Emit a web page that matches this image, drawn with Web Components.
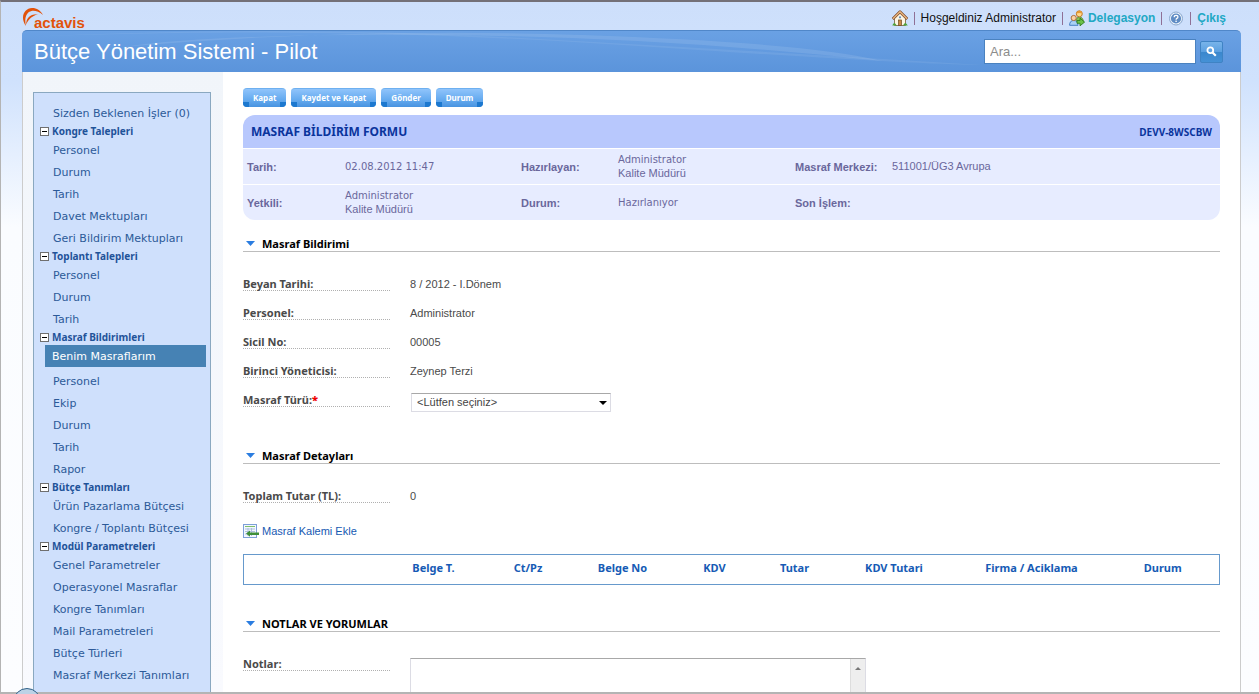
<!DOCTYPE html>
<html lang="tr">
<head>
<meta charset="utf-8">
<title>Bütçe Yönetim Sistemi - Pilot</title>
<style>
html, body { height: 100%; margin: 0; }
body { overflow: hidden; font-family: "Liberation Sans", Arial, sans-serif; font-size: 11px; color: #4a4a4a; }
</style>
</head>
<body>
<app-shell></app-shell>

<script>
const define = (name, html, setup) => {
  const tpl = document.createElement('template');
  tpl.innerHTML = html;
  customElements.define(name, class extends HTMLElement {
    constructor() {
      super();
      this.attachShadow({ mode: 'open' }).append(tpl.content.cloneNode(true));
    }
    connectedCallback() { if (setup) setup(this, this.shadowRoot); }
  });
};

/* Logo: swoosh and word mark */
define('brand-logo', `
<style>
:host { display: block; }
svg { display: block; }
</style>
<svg width="72" height="26" viewBox="0 0 72 26" role="img" aria-label="actavis">
  <path d="M4 18C-2.500 9 2.500 .3 10 .1 14.500 0 18.500 2.300 21 7 17 3.600 13 2.400 9.500 3 4.500 4 2 10 4 18Z" fill="#e2520a"/>
  <path d="M4.200 16.500C4 10.500 8 5.600 16 6.200 10.500 7.600 6.500 11 4.200 16.500Z" fill="#e2520a"/>
  <text x="12" y="20" font-family="Liberation Sans, Arial, sans-serif" font-size="15" font-weight="bold" fill="#e2520a">actavis</text>
</svg>`);

/* User links at the top right */
define('user-bar', `
<style>
:host { display: block; font-size: 12px; line-height: 16px; color: #111; }
nav { display: flex; align-items: center; gap: 6px; }
a { color: #22a8c4; font-weight: bold; text-decoration: none; display: flex; align-items: center; gap: 3px; }
i { width: 1px; height: 13px; background: #8f7096; }
svg { display: block; }
</style>
<nav>
  <a href="#" aria-label="Ana sayfa"><svg width="16" height="16" viewBox="0 0 16 16">
    <path d="M2.500 8v7.500h11V8L8 3Z" fill="#fdf6e4" stroke="#8c7a5c"/>
    <path d="M.7 9 8 1.800 15.300 9" fill="none" stroke="#7a4526" stroke-width="2.800" stroke-linejoin="round"/>
    <path d="M1 8.700 8 1.800 15 8.700" fill="none" stroke="#e9b780" stroke-width="1.500"/>
    <rect x="6.500" y="10" width="3" height="5.500" fill="#c98a48" stroke="#6f4a20" stroke-width=".7"/>
    <circle cx="8" cy="7.300" r="1.100" fill="#5d8ab8"/>
    <path d="M.3 15.600q1.700-5 4.500 0ZM11 15.600q2.200-5 4.800 0Z" fill="#4da33c"/></svg></a>
  <i></i>
  <span>Hoşgeldiniz Administrator</span>
  <i></i>
  <a href="#"><svg width="16" height="16" viewBox="0 0 16 16">
    <path d="M7 12q0-5 3.500-5t4 5Z" fill="#8cc152" stroke="#4f8a2c" stroke-width=".8"/>
    <circle cx="10.300" cy="3.800" r="3" fill="#ffd98a" stroke="#c07a28"/>
    <path d="M7.300 3.500Q8 .6 10.500.8q2.500.2 2.800 2.600-3-1-6 .1Z" fill="#e79a34"/>
    <path d="M.6 15.300Q.6 10.500 4.700 10.500t4.300 4.800Z" fill="#a9d0f5" stroke="#3a77bd" stroke-width=".9"/>
    <circle cx="4.700" cy="8" r="2.600" fill="#fbd2a4" stroke="#a8672c" stroke-width=".9"/>
    <path d="M8 10.500h3V8.200l4.600 3.900L11 15.800v-2.500H8Z" fill="#6cc24a" stroke="#2f7d1e" stroke-width=".9"/></svg>Delegasyon</a>
  <i></i>
  <a href="#" aria-label="Yardım"><svg width="16" height="16" viewBox="0 0 16 16">
    <circle cx="8" cy="8.500" r="6.500" fill="#eef4fb" stroke="#8ba9cf"/>
    <circle cx="8" cy="8.500" r="5.100" fill="#5f8cc4"/>
    <path d="M6.200 7.200q0-1.800 1.900-1.800t1.800 1.600q0 .9-1 1.400-.8.400-.8 1.300" fill="none" stroke="#fff" stroke-width="1.300"/>
    <rect x="7.400" y="10.600" width="1.400" height="1.400" fill="#fff"/></svg></a>
  <i></i>
  <a href="#">Çıkış</a>
</nav>`);

/* Blue banner with title and search */
define('app-banner', `
<style>
:host { display: block; }
header { position: relative; display: flex; align-items: center; justify-content: space-between; height: 42px; box-sizing: border-box;
  padding: 0 18px 0 12px; border-radius: 5px 5px 0 0; border-top: 1px solid #5087c9; overflow: hidden;
  background: linear-gradient(#6aa1e4, #5b94db); }
.wave { position: absolute; left: 0; top: 0; width: 100%; height: 36px; }
h1 { margin: 0; font-size: 22px; line-height: 28px; font-weight: normal; color: #fff; position: relative; }
form { display: flex; align-items: center; gap: 4px; position: relative; }
input { box-sizing: border-box; width: 212px; height: 25px; margin: 0; padding: 0 5px; border: 1px solid #4a82c0; border-radius: 0; background: #fff;
  font: 13px/20px "Liberation Sans", Arial, sans-serif; color: #333; }
input::placeholder { color: #8c8c8c; opacity: 1; }
button { box-sizing: border-box; width: 23px; height: 22px; padding: 0; border: 1px solid #3f83c4; border-radius: 2px; display: grid; place-items: center;
  background: linear-gradient(#78b4ea, #5a9fe0 50%, #3a87cd 50%, #4591d6); }
</style>
<header>
  <svg class="wave" viewBox="0 0 1219 36" preserveAspectRatio="none" aria-hidden="true">
    <path d="M0 6Q300-6 600 14T960 34Q700 18 480 6T0 6Z" fill="#fff" opacity=".07"/>
    <path d="M100 16Q330-4 560 4T860 30Q640 6 420 4T100 16Z" fill="#fff" opacity=".1"/>
  </svg>
  <h1>Bütçe Yönetim Sistemi - Pilot</h1>
  <form role="search">
    <input type="text" placeholder="Ara..." aria-label="Ara">
    <button type="button" aria-label="Ara"><svg width="11" height="11" viewBox="0 0 11 11"><circle cx="4.300" cy="4.300" r="2.900" fill="none" stroke="#fff" stroke-width="1.800"/><path d="m6.500 6.500 3.300 3.300" stroke="#fff" stroke-width="2.200"/></svg></button>
  </form>
</header>`);

/* Navigation */
define('nav-item', `
<style>
:host { display: block; }
a { display: block; padding: 2px 0 0 19px; line-height: 20px; color: #2c5a98; text-decoration: none; font-size: 11px; font-family: "DejaVu Sans", Verdana, sans-serif; white-space: nowrap; }
:host([current]) { margin-bottom: 3px; }
:host([current]) a { margin: 0 4px 0 11px; padding-left: 7px; background: #4682b4; color: #fff; }
</style>
<a href="#"><slot></slot></a>`);

define('nav-group', `
<style>
:host { display: block; }
button { display: flex; align-items: center; gap: 3px; height: 15px; margin: 0; padding: 0 0 0 6px; border: 0; background: none; color: #1f5399;
  font: bold 10px/15px "Noto Sans", Tahoma, sans-serif; white-space: nowrap; }
svg { display: block; }
</style>
<button type="button" aria-expanded="true"><svg width="9" height="9" viewBox="0 0 9 9" aria-hidden="true"><rect x=".5" y=".5" width="8" height="8" fill="#fff" stroke="#6f6f6f"/><path d="M2 4.500h5" stroke="#000"/></svg><span></span></button>
<slot></slot>`, (el, root) => { root.querySelector('span').textContent = el.getAttribute('heading'); });

define('side-nav', `
<style>
:host { display: block; }
nav { box-sizing: border-box; height: 100%; padding-top: 9px; overflow: hidden; background: #cfe0fc; border: 1px solid #8aa8c0; border-bottom: 0; }
</style>
<nav aria-label="Menü">
  <nav-item>Sizden Beklenen İşler (0)</nav-item>
  <nav-group heading="Kongre Talepleri">
    <nav-item>Personel</nav-item><nav-item>Durum</nav-item><nav-item>Tarih</nav-item>
    <nav-item>Davet Mektupları</nav-item><nav-item>Geri Bildirim Mektupları</nav-item>
  </nav-group>
  <nav-group heading="Toplantı Talepleri">
    <nav-item>Personel</nav-item><nav-item>Durum</nav-item><nav-item>Tarih</nav-item>
  </nav-group>
  <nav-group heading="Masraf Bildirimleri">
    <nav-item current>Benim Masraflarım</nav-item>
    <nav-item>Personel</nav-item><nav-item>Ekip</nav-item><nav-item>Durum</nav-item><nav-item>Tarih</nav-item><nav-item>Rapor</nav-item>
  </nav-group>
  <nav-group heading="Bütçe Tanımları">
    <nav-item>Ürün Pazarlama Bütçesi</nav-item><nav-item>Kongre / Toplantı Bütçesi</nav-item>
  </nav-group>
  <nav-group heading="Modül Parametreleri">
    <nav-item>Genel Parametreler</nav-item><nav-item>Operasyonel Masraflar</nav-item><nav-item>Kongre Tanımları</nav-item>
    <nav-item>Mail Parametreleri</nav-item><nav-item>Bütçe Türleri</nav-item><nav-item>Masraf Merkezi Tanımları</nav-item>
  </nav-group>
</nav>`);

/* Toolbar button */
define('action-button', `
<style>
:host { display: block; }
button { position: relative; display: block; height: 19px; margin: 0; padding: 0 10px; border: 0; border-top: 1px solid #6eb0f0; border-radius: 4px; overflow: hidden;
  background: linear-gradient(#90c4fb, #64aaef 60%, #4893e0); color: #fff; font: bold 8px/18px "Noto Sans", Tahoma, sans-serif; white-space: nowrap; }
button::before, button::after { content: ""; position: absolute; bottom: 0; width: 6px; height: 5px; background: #1c78cf; }
button::before { left: 0; }
button::after { right: 0; }
</style>
<button type="button"><slot></slot></button>`);

/* Document header card */
define('form-summary', `
<style>
:host { display: block; border-radius: 12px; overflow: hidden; color: #6a679c; }
header { display: flex; align-items: center; justify-content: space-between; height: 33px; padding: 0 8px; background: #b8c8fd; color: #0a349c; font-family: "Noto Sans", Tahoma, sans-serif; }
h2 { margin: 0; font-size: 12px; line-height: 16px; }
strong { font-size: 10px; line-height: 16px; }
dl { display: grid; grid-template-columns: 98fr 176fr 97fr 177fr 97fr 328fr; align-items: center; height: 35px; margin: 1px 0 0; padding-left: 4px; background: #e7ecff; line-height: 14px; }
dt { font-weight: bold; font-size: 11px; white-space: nowrap; }
dd { margin: 0; font: 10px/14px "DejaVu Sans", Verdana, sans-serif; }
dd span { display: block; font: 11px/13px "Liberation Sans", Arial, sans-serif; }
</style>
<header><h2>MASRAF BİLDİRİM FORMU</h2><strong>DEVV-8WSCBW</strong></header>
<dl>
  <dt>Tarih:</dt><dd>02.08.2012 11:47</dd>
  <dt>Hazırlayan:</dt><dd>Administrator<span>Kalite Müdürü</span></dd>
  <dt>Masraf Merkezi:</dt><dd><span>511001/ÜG3 Avrupa</span></dd>
</dl>
<dl>
  <dt>Yetkili:</dt><dd>Administrator<span>Kalite Müdürü</span></dd>
  <dt>Durum:</dt><dd>Hazırlanıyor</dd>
  <dt>Son İşlem:</dt><dd></dd>
</dl>`);

/* Section with underlined heading */
define('form-section', `
<style>
:host { display: block; }
h3 { display: flex; align-items: center; gap: 7px; margin: 0 0 23px; padding: 0 0 0 3px; border-bottom: 1px solid #bdbdbd; color: #000; font: bold 11px/15px "Noto Sans", Tahoma, sans-serif; }
svg { display: block; }
</style>
<h3><svg width="9" height="5" viewBox="0 0 9 5" aria-hidden="true"><path d="M0 0h9L4.500 5Z" fill="#2b7de0"/></svg><span></span></h3>
<slot></slot>`, (el, root) => { root.querySelector('span').textContent = el.getAttribute('heading'); });

define('field-row', `
<style>
:host { display: flex; align-items: flex-start; gap: 20px; height: 29px; }
.label { flex: none; width: 147px; height: 16px; box-sizing: border-box; border-bottom: 1px dotted #b0b0b0; font: bold 11px/18px "Noto Sans", Tahoma, sans-serif; white-space: nowrap; }
.value { flex: 1; line-height: 18px; }
</style>
<div class="label"><slot name="label"></slot></div><div class="value"><slot></slot></div>`);

define('expense-table', `
<style>
:host { display: block; }
table { width: 100%; height: 31px; table-layout: fixed; border-collapse: collapse; border: 1px solid #6699cc; }
th, td { padding: 0 0 4px; font: bold 11px/16px "Noto Sans", Tahoma, sans-serif; color: #165bb5; text-align: center; white-space: nowrap; }
</style>
<table>
  <colgroup><col style="width:141px"><col style="width:98px"><col style="width:91px"><col style="width:98px"><col style="width:86px"><col style="width:74px"><col style="width:125px"><col style="width:150px"><col></colgroup>
  <thead><tr><td></td><th scope="col">Belge T.</th><th scope="col">Ct/Pz</th><th scope="col">Belge No</th><th scope="col">KDV</th><th scope="col">Tutar</th><th scope="col">KDV Tutari</th><th scope="col">Firma / Aciklama</th><th scope="col">Durum</th></tr></thead>
</table>`);

/* The expense form */
define('expense-form', `
<style>
:host { display: block; padding: 16px 20px 0; background: #fff; }
.actions { display: flex; gap: 5px; margin-bottom: 8px; }
form-summary { margin-bottom: 16px; }
.details { margin-top: 28px; }
.notes { margin-top: 31px; }
b { color: #e00; }
.pick { display: block; position: relative; width: 200px; margin: 2px 0 0 1px; }
select { appearance: none; display: block; box-sizing: border-box; width: 100%; height: 19px; margin: 0; padding: 0 20px 0 5px; border: 1px solid #dcdce4; border-top-color: #a8a8a8; border-radius: 0; background: #fff;
  font: 11px/17px "Liberation Sans", Arial, sans-serif; color: #444; }
.pick svg { position: absolute; right: 4px; top: 8px; }
.add { display: flex; align-items: center; gap: 3px; width: max-content; height: 16px; margin: 7px 0 15px; color: #1659b2; text-decoration: none; }
.box { display: flex; width: 456px; height: 120px; box-sizing: border-box; margin-top: 3px; border: 1px solid #dcdce4; border-top-color: #a8a8a8; }
textarea { flex: 1; margin: 0; padding: 2px; border: 0; resize: none; overflow: hidden; background: #fff; font: 11px/14px "Liberation Sans", Arial, sans-serif; }
.bar { width: 15px; background: #eee; border-left: 1px solid #ddd; box-sizing: border-box; padding: 7px 3px; }
.bar svg { display: block; }
</style>
<div class="actions"><action-button>Kapat</action-button><action-button>Kaydet ve Kapat</action-button><action-button>Gönder</action-button><action-button>Durum</action-button></div>
<form-summary></form-summary>
<form-section heading="Masraf Bildirimi">
  <field-row><span slot="label">Beyan Tarihi:</span>8 / 2012 - I.Dönem</field-row>
  <field-row><span slot="label">Personel:</span>Administrator</field-row>
  <field-row><span slot="label">Sicil No:</span>00005</field-row>
  <field-row><span slot="label">Birinci Yöneticisi:</span>Zeynep Terzi</field-row>
  <field-row><label slot="label" for="kind">Masraf Türü:<b>*</b></label>
    <span class="pick"><select id="kind"><option>&lt;Lütfen seçiniz&gt;</option></select><svg width="8" height="4" viewBox="0 0 8 4" aria-hidden="true"><path d="M0 0h8L4 4Z"/></svg></span></field-row>
</form-section>
<form-section class="details" heading="Masraf Detayları">
  <field-row><span slot="label">Toplam Tutar (TL):</span>0</field-row>
  <a class="add" href="#"><svg width="16" height="14" viewBox="0 0 16 14" aria-hidden="true">
    <rect x=".5" y=".5" width="13" height="13" fill="#f3f8ff" stroke="#7d9fd8"/>
    <path d="M2 2.500h10" stroke="#7fbf6a"/><path d="M2 5h10M2 7.500h10M2 10h10M5 4v8M8.500 4v8" stroke="#aebfdd"/>
    <path d="m3 9.500 4-3v2h9v2.500H7v1.800Z" fill="#3f8f3a"/></svg>Masraf Kalemi Ekle</a>
  <expense-table></expense-table>
</form-section>
<form-section class="notes" heading="NOTLAR VE YORUMLAR">
  <field-row><label slot="label" for="notes">Notlar:</label>
    <div class="box"><textarea id="notes"></textarea><div class="bar" aria-hidden="true"><svg width="8" height="5" viewBox="0 0 8 5"><path d="M1 4h6L4 1Z" fill="#777"/></svg></div></div></field-row>
</form-section>`);

define('app-shell', `
<style>
:host { display: flex; flex-direction: column; box-sizing: border-box; height: 100vh; overflow: hidden; padding: 5px 18px 0 21px;
  border: solid #b4b4b4; border-width: 2px 0 2px 1px; border-top-color: #737078;
  background: linear-gradient(#cddffb, #d0e2fd 80px, #fafcff 225px, #fcfdff); }
.top { display: flex; justify-content: space-between; align-items: flex-start; flex: none; height: 23px; }
brand-logo { margin-top: 1px; }
user-bar { margin: 3px 15px 0 0; }
app-banner { flex: none; }
.body { flex: 1; min-height: 0; display: grid; grid-template-columns: 200px 1fr; border: solid #ccc; border-width: 0 1px; box-sizing: border-box; }
.side { min-height: 0; overflow: hidden; box-sizing: border-box; padding: 20px 12px 0 10px; background: linear-gradient(#f1f5fa, #f9fafe); }
side-nav { height: 100%; }
expense-form { min-height: 0; overflow: hidden; }
.orb { position: absolute; left: 13px; bottom: -22px; width: 26px; height: 26px; border: 1px solid #2f6087; border-radius: 50%; background: #bcd2e6; }
</style>
<div class="top"><brand-logo></brand-logo><user-bar></user-bar></div>
<app-banner></app-banner>
<div class="body"><div class="side"><side-nav></side-nav></div><expense-form></expense-form></div>
<div class="orb"></div>`);
</script>
</body>
</html>
